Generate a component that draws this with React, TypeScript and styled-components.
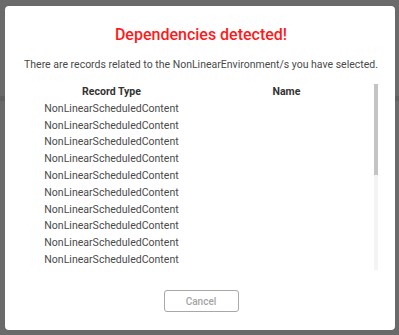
import React from "react";
import styled, { createGlobalStyle } from "styled-components";

const GlobalStyle = createGlobalStyle`
  html, body {
    margin: 0;
    padding: 0;
    width: 399px;
    height: 335px;
    overflow: hidden;
  }
  body {
    font-family: Roboto, "Liberation Sans", sans-serif;
    background: linear-gradient(
      180deg,
      #6a6a6a 0px,
      #6a6a6a 96px,
      #606060 96px,
      #606060 101px,
      #6a6a6a 101px
    );
  }
`;

const Backdrop = styled.div`
  width: 399px;
  height: 335px;
  box-sizing: border-box;
  padding: 6px 4px 5px 5px;
`;

const Dialog = styled.div`
  width: 390px;
  height: 324px;
  box-sizing: border-box;
  background: #fff;
  border-radius: 4px;
  display: flex;
  flex-direction: column;
  align-items: center;
  padding: 19px 17px 18px 19px;
`;

const Title = styled.h2`
  margin: 0;
  font-size: 16px;
  line-height: 19px;
  font-weight: 500;
  color: #fe1a1a;
  text-align: center;
`;

const Message = styled.p`
  margin: 12px 0 0;
  font-size: 10.5px;
  line-height: 17px;
  color: #4a4a4a;
  text-align: center;
  white-space: nowrap;
`;

const ListBox = styled.div`
  margin-top: 11px;
  width: 354px;
  height: 186px;
  align-self: flex-start;
  display: flex;
`;

const ScrollArea = styled.div`
  width: 350px;
  height: 100%;
  overflow: hidden;
`;

const ScrollTrack = styled.div`
  width: 4px;
  height: 100%;
  background: #f3f3f3;
  display: flex;
  flex-direction: column;
`;

const ScrollThumb = styled.div<{ $size: number }>`
  height: ${(p) => p.$size}px;
  background: #c4c4c4;
`;

const Table = styled.table`
  width: 100%;
  border-collapse: collapse;
  table-layout: fixed;
  font-size: 10.55px;
  line-height: 16.8px;
`;

const HeadCell = styled.th`
  padding: 0;
  font-weight: 700;
  color: #333;
  text-align: center;
`;

const Cell = styled.td`
  padding: 0;
  color: #4a4a4a;
  text-align: center;
  white-space: nowrap;
`;

const Footer = styled.div`
  margin-top: 20px;
  display: flex;
  justify-content: center;
`;

const CancelButton = styled.button`
  width: 75px;
  height: 22px;
  box-sizing: border-box;
  background: #fff;
  border: 1px solid #a8a8a8;
  border-radius: 3px;
  font-family: Roboto, "Liberation Sans", sans-serif;
  font-size: 10px;
  font-weight: 500;
  color: #a5a5a5;
  cursor: pointer;
`;

const records = Array.from({ length: 10 }, () => ({
  type: "NonLinearScheduledContent",
  name: "",
}));

export default function App() {
  return (
    <>
      <GlobalStyle />
      <Backdrop>
        <Dialog>
          <Title>Dependencies detected!</Title>
          <Message>
            There are records related to the NonLinearEnvironment/s you have
            selected.
          </Message>
          <ListBox>
            <ScrollArea>
              <Table>
                <thead>
                  <tr>
                    <HeadCell>Record Type</HeadCell>
                    <HeadCell>Name</HeadCell>
                  </tr>
                </thead>
                <tbody>
                  {records.map((r, i) => (
                    <tr key={i}>
                      <Cell>{r.type}</Cell>
                      <Cell>{r.name}</Cell>
                    </tr>
                  ))}
                </tbody>
              </Table>
            </ScrollArea>
            <ScrollTrack>
              <ScrollThumb $size={91} />
            </ScrollTrack>
          </ListBox>
          <Footer>
            <CancelButton>Cancel</CancelButton>
          </Footer>
        </Dialog>
      </Backdrop>
    </>
  );
}
